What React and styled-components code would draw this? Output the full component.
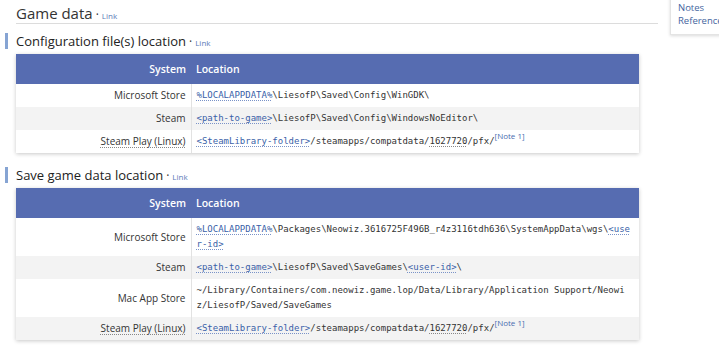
import React from "react";
import styled, { createGlobalStyle } from "styled-components";

const Global = createGlobalStyle`
  html, body { margin: 0; padding: 0; background: #fff; }
  body { font-family: "Open Sans", "Liberation Sans", sans-serif; color: #333; }
`;

const Page = styled.div`
  position: relative;
  width: 719px;
  height: 347px;
  overflow: hidden;
`;

const Content = styled.div`
  padding: 4px 0 0 16px;
  width: 642px;
`;

const H2 = styled.h2`
  margin: 0;
  height: 19px;
  font-size: 15px;
  font-weight: 400;
  line-height: 19px;
  color: #333;
  border-bottom: 1px solid #dcdcdc;
`;

const H3 = styled.h3`
  position: relative;
  margin: ${(p) => p.$top}px 0 5px 0;
  height: 16px;
  font-size: 13px;
  font-weight: 500;
  line-height: 16px;
  color: #222;
  &::before {
    content: "";
    position: absolute;
    left: -11px;
    top: 0;
    width: 3px;
    height: 16px;
    background: #86a4d3;
  }
`;

const SecLink = styled.span`
  font-size: 8px;
  font-weight: 400;
  line-height: 1;
  color: #5a7bb8;
  margin-left: 3px;
  &::before {
    content: "·";
    color: #333;
    font-size: 12px;
    line-height: 1;
    margin-right: 3px;
  }
`;

const Table = styled.table`
  width: 623px;
  border-collapse: collapse;
  table-layout: fixed;
  box-shadow: 0 1px 4px rgba(0, 0, 0, 0.22);
  font-size: 10px;
`;

const Th = styled.th`
  background: #566cb1;
  color: #fff;
  font-weight: 600;
  font-size: 10.5px;
  line-height: 16px;
  padding: 7px 5px;
  text-align: ${(p) => (p.$right ? "right" : "left")};
`;

const Tr = styled.tr`
  background: #fff;
  &:nth-child(even) { background: #f3f3f3; }
`;

const SysCell = styled.td`
  text-align: right;
  padding: 4px 5px;
  line-height: 15px;
  border-right: 1px solid #e2e2e2;
  color: #333;
  vertical-align: middle;
`;

const LocCell = styled.td`
  padding: 4px 7px 4px 5px;
  line-height: 15px;
  font-family: "DejaVu Sans Mono", "Liberation Mono", monospace;
  font-size: 9px;
  word-break: break-all;
  color: #333;
  vertical-align: middle;
`;

const Abbr = styled.span`
  color: ${(p) => (p.$plain ? "#333" : "#3a5fa8")};
  text-decoration: underline dotted;
  text-decoration-color: ${(p) => (p.$plain ? "#888" : "#7a93c8")};
  text-underline-offset: 2px;
`;

const Note = styled.sup`
  font-family: "Open Sans", "Liberation Sans", sans-serif;
  font-size: 8px;
  color: #4a6cb0;
  line-height: 0;
  vertical-align: 5px;
`;

const Toc = styled.div`
  position: absolute;
  left: 670px;
  top: -6px;
  width: 70px;
  padding: 6px 0 7px 7px;
  background: #fff;
  border: 1px solid #e4e4e4;
  box-shadow: 0 1px 3px rgba(0, 0, 0, 0.15);
  font-size: 9.5px;
  line-height: 13px;
  color: #44649e;
`;

const TocItem = styled.div`
  white-space: nowrap;
`;

const SysLabel = ({ dotted, children }) =>
  dotted ? <Abbr $plain>{children}</Abbr> : children;

const rowsConfig = [
  {
    sys: "Microsoft Store",
    loc: (
      <>
        <Abbr>%LOCALAPPDATA%</Abbr>\LiesofP\Saved\Config\WinGDK\
      </>
    ),
  },
  {
    sys: "Steam",
    loc: (
      <>
        <Abbr>&lt;path-to-game&gt;</Abbr>\LiesofP\Saved\Config\WindowsNoEditor\
      </>
    ),
  },
  {
    sys: "Steam Play (Linux)",
    dotted: true,
    loc: (
      <>
        <Abbr>&lt;SteamLibrary-folder&gt;</Abbr>/steamapps/compatdata/
        <Abbr $plain>1627720</Abbr>/pfx/<Note>[Note 1]</Note>
      </>
    ),
  },
];

const rowsSave = [
  {
    sys: "Microsoft Store",
    loc: (
      <>
        <Abbr>%LOCALAPPDATA%</Abbr>
        \Packages\Neowiz.3616725F496B_r4z3116tdh636\SystemAppData\wgs\
        <Abbr>&lt;user-id&gt;</Abbr>
      </>
    ),
  },
  {
    sys: "Steam",
    loc: (
      <>
        <Abbr>&lt;path-to-game&gt;</Abbr>\LiesofP\Saved\SaveGames\
        <Abbr>&lt;user-id&gt;</Abbr>\
      </>
    ),
  },
  {
    sys: "Mac App Store",
    loc: (
      <>
        ~/Library/Containers/com.neowiz.game.lop/Data/Library/Application
        Support/Neowiz/LiesofP/Saved/SaveGames
      </>
    ),
  },
  {
    sys: "Steam Play (Linux)",
    dotted: true,
    loc: (
      <>
        <Abbr>&lt;SteamLibrary-folder&gt;</Abbr>/steamapps/compatdata/
        <Abbr $plain>1627720</Abbr>/pfx/<Note>[Note 1]</Note>
      </>
    ),
  },
];

const SysCol = styled.col`
  width: 175px;
`;

const LocTable = ({ rows }) => (
  <Table>
    <colgroup>
      <SysCol />
      <col />
    </colgroup>
    <thead>
      <tr>
        <Th $right>System</Th>
        <Th>Location</Th>
      </tr>
    </thead>
    <tbody>
      {rows.map((r, i) => (
        <Tr key={i}>
          <SysCell>
            <SysLabel dotted={r.dotted}>{r.sys}</SysLabel>
          </SysCell>
          <LocCell>{r.loc}</LocCell>
        </Tr>
      ))}
    </tbody>
  </Table>
);

export default function App() {
  return (
    <Page>
      <Global />
      <Content>
        <H2>
          Game data<SecLink>Link</SecLink>
        </H2>
        <H3 $top={9}>
          Configuration file(s) location<SecLink>Link</SecLink>
        </H3>
        <LocTable rows={rowsConfig} />
        <H3 $top={14}>
          Save game data location<SecLink>Link</SecLink>
        </H3>
        <LocTable rows={rowsSave} />
      </Content>
      <Toc>
        <TocItem>Notes</TocItem>
        <TocItem>References</TocItem>
      </Toc>
    </Page>
  );
}
